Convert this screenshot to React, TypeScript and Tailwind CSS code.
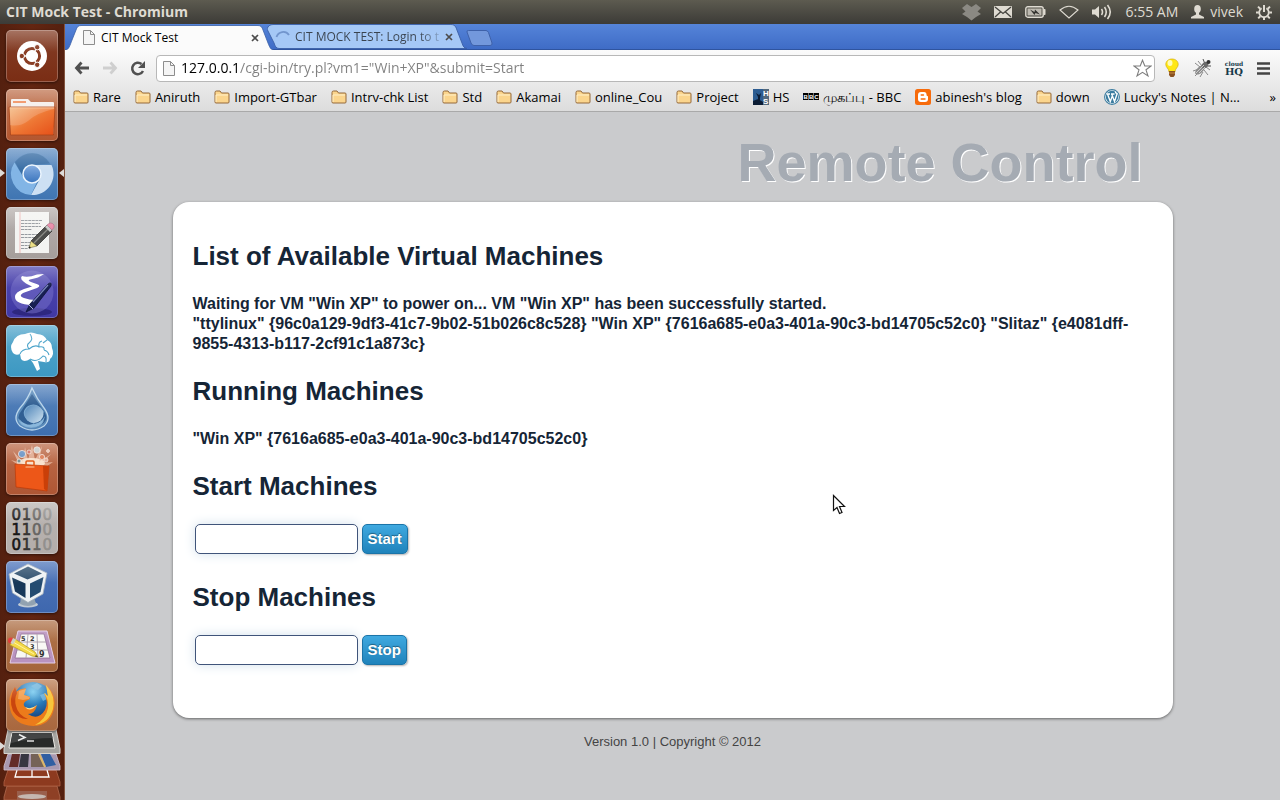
import type { ReactNode } from "react";

const UI_FONT = "font-['Open_Sans','Noto_Sans',sans-serif]";

/* ---------- top panel ---------- */

function DropboxIcon() {
  return (
    <svg className="h-[18px] w-[19px]" viewBox="0 0 19 18" fill="#8b8983" aria-hidden="true">
      <path d="M5 1 L9.5 4 L14 1 L19 5 L15.5 8.5 L19 11 L14 14 L9.5 17.5 L5 14 L0 11 L3.5 8.5 L0 5Z" />
    </svg>
  );
}

function MailIcon() {
  return (
    <svg className="h-3 w-[18px]" viewBox="0 0 18 12" aria-hidden="true">
      <rect width="18" height="12" rx="1" fill="#dfdbd2" />
      <path d="M1 1 L9 7.5 L17 1 M1 11 L6.5 6 M17 11 L11.5 6" fill="none" stroke="#45443f" strokeWidth="1.3" />
    </svg>
  );
}

function BatteryIcon() {
  return (
    <svg className="h-3 w-[21px]" viewBox="0 0 21 12" aria-hidden="true">
      <rect x="0.8" y="0.8" width="17.4" height="10.4" rx="2" fill="none" stroke="#dfdbd2" strokeWidth="1.4" />
      <rect x="2.5" y="2.5" width="14" height="7" fill="#bdb9b0" />
      <rect x="18.5" y="3" width="2" height="6" rx="0.8" fill="#dfdbd2" />
      <path d="M5 3.5 L9.5 6 L10 3.5 L15 8.5 L10.5 7 L9.5 9Z" fill="#34332f" />
    </svg>
  );
}

function WifiIcon() {
  return (
    <svg className="h-[14px] w-5" viewBox="0 0 20 14" aria-hidden="true">
      <path d="M1 5 Q10 -2.6 19 5 L10 13Z" fill="none" stroke="#dfdbd2" strokeWidth="1.1" />
    </svg>
  );
}

function VolumeIcon() {
  return (
    <svg className="h-4 w-5" viewBox="0 0 20 16" aria-hidden="true">
      <path d="M0 5.5 H3 L7 2 V14 L3 10.5 H0Z" fill="#dfdbd2" />
      <path d="M9.5 5 Q11.5 8 9.5 11 M12.5 3 Q16 8 12.5 13 M15.5 1 Q21 8 15.5 15" fill="none" stroke="#dfdbd2" strokeWidth="1.6" />
    </svg>
  );
}

function UserIcon() {
  return (
    <svg className="h-[14px] w-[13px]" viewBox="0 0 13 14" fill="#dfdbd2" aria-hidden="true">
      <ellipse cx="6.5" cy="4" rx="3.3" ry="4" />
      <path d="M5 7 H8 V9.6 L13 12 V13.5 H0 V12 L5 9.6Z" />
    </svg>
  );
}

function SessionIcon() {
  return (
    <svg className="h-4 w-4" viewBox="0 0 16 16" fill="none" stroke="#dfdbd2" aria-hidden="true">
      <path d="M5.6 4.3 A4.8 4.8 0 1 0 10.4 4.3" strokeWidth="1.8" />
      <path d="M8 1 V8" strokeWidth="2" />
      <path d="M0 8.5 H2.8 M13.2 8.5 H16 M2 2.6 L4.2 4.8 M14 2.6 L11.8 4.8 M2.2 14.4 L4.3 12.3 M13.8 14.4 L11.7 12.3 M8 13.4 V16" strokeWidth="2" />
    </svg>
  );
}

function TopPanel() {
  return (
    <header className="flex h-6 shrink-0 items-center justify-between bg-linear-to-b from-[#5d5b50] to-[#3c3b37] pr-2 pl-1.5 text-[#dfdbd2]">
      <p className="text-sm leading-6 font-bold">CIT Mock Test - Chromium</p>
      <div className="flex items-center gap-[13px] text-sm leading-6">
        <DropboxIcon />
        <MailIcon />
        <BatteryIcon />
        <WifiIcon />
        <VolumeIcon />
        <time>6:55 AM</time>
        <button type="button" className="flex items-center gap-1.5">
          <UserIcon />
          vivek
        </button>
        <button type="button" aria-label="Session">
          <SessionIcon />
        </button>
      </div>
    </header>
  );
}

/* ---------- launcher ---------- */

function Tile({ label, tone, marks, children }: { label: string; tone: string; marks?: boolean; children: ReactNode }) {
  return (
    <div className="relative flex w-full shrink-0 justify-center pr-px">
      {marks && (
        <>
          <svg className="absolute top-[21px] left-0 h-2 w-[5px]" viewBox="0 0 5 8" fill="#dedbd8" aria-hidden="true">
            <path d="M0 0 L5 4 L0 8Z" />
          </svg>
          <svg className="absolute top-[21px] right-0 h-2 w-[5px]" viewBox="0 0 5 8" fill="#dedbd8" aria-hidden="true">
            <path d="M5 0 L0 4 L5 8Z" />
          </svg>
        </>
      )}
      <button
        type="button"
        aria-label={label}
        className={`size-[52px] overflow-hidden rounded-[5px] shadow-[inset_0_0_0_1px_rgba(255,255,255,0.25),0_1px_3px_rgba(0,0,0,0.5)] ${tone}`}
      >
        <svg className="size-full" viewBox="0 0 52 52" aria-hidden="true">
          {children}
          <rect width="52" height="22" fill="url(#gloss)" />
        </svg>
      </button>
    </div>
  );
}

function DashArt() {
  return (
    <>
      <circle cx="26" cy="26" r="15" fill="#fff" />
      <circle cx="26" cy="26" r="7.6" fill="none" stroke="#8a3e25" strokeWidth="3" />
      <path d="M26 26 L12 26 M26 26 L33 14 M26 26 L33 38" stroke="#fff" strokeWidth="1.4" />
      <circle cx="26" cy="26" r="5.8" fill="#fff" />
      <g fill="#8a3e25" stroke="#fff" strokeWidth="1">
        <circle cx="15.8" cy="26" r="2.7" />
        <circle cx="31.2" cy="17.2" r="2.7" />
        <circle cx="31.2" cy="34.8" r="2.7" />
      </g>
    </>
  );
}

function FilesArt() {
  return (
    <>
      <path d="M5 11 Q5 10 6 10 H22 L25 13 H47 Q48 13 48 14 V45 H5Z" fill="#f5efec" />
      <rect x="7" y="12" width="13" height="2" fill="#f09060" />
      <path d="M3 18 H49 L47.5 46 H4.5Z" fill="url(#folder)" stroke="#a94419" strokeWidth="0.8" />
      <path d="M4 19 H48" stroke="#fbd0ae" strokeWidth="1" />
      <path d="M4 20 H48 Q30 24 22 32 Q14 38 4 36Z" fill="#fff" opacity="0.17" />
    </>
  );
}

function ChromiumArt() {
  return (
    <>
      <circle cx="26" cy="26" r="21" fill="#4a80b8" opacity="0.6" />
      <path d="M9 14 A21 21 0 0 1 44 15.500 L26 17 L18 30Z" fill="#34689f" opacity="0.75" />
      <path d="M27 17 H45.500 A21 21 0 0 1 25 47 L34.500 30Z" fill="#cde0f3" />
      <path d="M8.500 14.500 A21 21 0 0 0 25 47 L31 34 L19 32Z" fill="#82b5e6" />
      <circle cx="26" cy="26" r="9" fill="url(#orb)" stroke="#eaf4fd" strokeWidth="1.500" />
    </>
  );
}

function EditorArt() {
  return (
    <>
      <rect x="9" y="6" width="35" height="41" fill="#a6a09e" opacity="0.7" />
      <rect x="9" y="5" width="34" height="41" fill="#f3f3f1" />
      <path d="M14 5 V46" stroke="#eda9a9" strokeWidth="0.8" />
      <path d="M15 13.500 H36 M15 16.500 H34 M15 19.500 H35 M15 22.500 H26 M15 27.500 H32 M15 30.500 H29 M15 35.500 H26 M15 38.500 H25 M15 41.500 H22" stroke="#969a9f" strokeWidth="1" strokeDasharray="3 0.600" />
      <path d="M25 34 L41 18 L46 24 L31 39Z" fill="#4d4d4b" stroke="#252523" strokeWidth="0.7" />
      <path d="M28 36 L43.500 20.500" stroke="#8c8c86" strokeWidth="1.200" />
      <path d="M39 20 L42 17 L47 22 L44 25Z" fill="#c7c9c8" />
      <path d="M41 18 Q45 14 48 18 Q49 20 46 23Z" fill="#e98ca8" stroke="#a55b76" strokeWidth="0.5" />
      <path d="M25 34 L31 39 L23 41Z" fill="#ecdf86" stroke="#5b5533" strokeWidth="0.500" />
      <circle cx="23.600" cy="40.400" r="1" fill="#222" />
    </>
  );
}

function EmacsArt() {
  return (
    <>
      <ellipse cx="26" cy="46" rx="20" ry="4" fill="#221d68" opacity="0.6" />
      <circle cx="26" cy="26" r="21.500" fill="#7771c9" opacity="0.5" />
      <path d="M16 10 Q22 12 31 8.500 L38 8 Q33 12 24 13.500 Q21 14.500 25 16 L32 18.500 Q35 20 31 22 L17 27 Q12 30 18 32 Q23 34 30 34 L26 39 Q9 38 9 31 Q9 26 18 23 L26 20.500 L20 17.500 Q13 13 16 10Z" fill="#fff" />
      <path d="M20 46 L24 38 L42 18 Q46 15 45 20 L28 42Z" fill="#182052" stroke="#0c1137" strokeWidth="0.800" />
      <path d="M27 36 L42 19" stroke="#7985bc" strokeWidth="1.200" />
      <path d="M23 39 L27 43" stroke="#bfc6ed" strokeWidth="0.900" />
    </>
  );
}

function BrainArt() {
  return (
    <>
      <path d="M7 28 Q3 22 7 17 Q10 9 19 9 Q25 6 31 9 Q38 9 41 15 Q46 17 46 23 Q49 30 44 34 Q44 38 38 37 L32 36 L34 44 L31 46 L27 38 L24 34 Q18 38 15 34 L14 29 Q10 31 7 28Z" fill="#fff" />
      <path d="M24 9 Q28 14 23 18 Q20 20 23 24 M14 29 Q16 24 23 24 Q29 19 33 22 Q39 21 38 25 M24 34 Q31 38 37 31 Q41 31 40 37 M33 22 Q32 17 36 16 M41 15 L37 18 M38 25 Q42 26 43 30" fill="none" stroke="#4ba4ca" strokeWidth="1.100" />
    </>
  );
}

function DelugeArt() {
  return (
    <>
      <path d="M26 4 Q31 15 38 24 Q46 35 38 42 Q26 50 14 42 Q6 35 14 24 Q22 15 26 4Z" fill="#5889b9" stroke="#b8d4ea" strokeWidth="1.300" />
      <path d="M26 10 L37 26 Q44 35 36 40 Q26 47 16 40 Q9 34 16 26Z" fill="#315f93" />
      <path d="M38 28 Q31 17 22 22 Q14 28 21 36 Q29 43 38 37 Q34 44 25 44 Q13 43 12 34 Q18 44 27 40" fill="#7fadd3" />
      <ellipse cx="28" cy="30" rx="9.500" ry="9" fill="url(#water)" />
      <path d="M39 32 Q37 43 26 43 Q16 43 13 35 Q20 43 29 40 Q36 38 39 32Z" fill="#8bb8dc" />
    </>
  );
}

function SoftwareArt() {
  return (
    <>
      <path d="M12 22 L5 17 L12 19 L7 8 L17 19 L19 4 L22 17 L26 2 L29 17 L36 3 L33 19 L45 11 L37 20 L47 19 L40 24Z" fill="#ffdcc6" opacity="0.55" />
      <ellipse cx="25" cy="20" rx="14" ry="5" fill="#fff0dc" opacity="0.8" />
      <g stroke="#f4e4dc" strokeWidth="0.800">
        <circle cx="16" cy="11" r="3.600" fill="#628fc2" />
        <circle cx="31" cy="7" r="3.200" fill="#c6cbca" />
        <circle cx="23" cy="9" r="2" fill="#d06256" />
        <circle cx="36" cy="14" r="2.600" fill="#db7951" />
        <circle cx="13" cy="18" r="2" fill="#738f91" />
        <circle cx="40" cy="17" r="2" fill="#e7ac95" />
        <circle cx="42" cy="8" r="1.400" fill="#e7ac95" />
      </g>
      <path d="M9 21 L43 23 L41 48 L10 44Z" fill="#ed5718" stroke="#ba3b0a" strokeWidth="0.700" />
      <path d="M37 23 L43 23 L41 48 L38 46Z" fill="#ca3f08" />
      <path d="M20 24 V19 Q20 18 21 18 H27 Q28 18 28 19 V25" fill="none" stroke="#e0560f" strokeWidth="1.500" />
      <path d="M19.500 24 H28.500" stroke="#ffc79c" strokeWidth="1" />
    </>
  );
}

function BinaryArt() {
  return (
    <g fontFamily="'DejaVu Sans', sans-serif" fontSize="15" strokeWidth="0.600">
      {["0100", "1100", "0110"].map((row, r) => (
        <g key={row}>
          {row.split("").map((d, i) => {
            const tone = ["#161616", "#343332", "#676563", "#92908d"][i];
            return (
              <text key={i} x={5.500 + i * 10.300} y={17.500 + r * 15} fill={tone} stroke={tone}>
                {d}
              </text>
            );
          })}
        </g>
      ))}
    </g>
  );
}

function VirtualBoxArt() {
  return (
    <>
      <ellipse cx="22" cy="43.500" rx="10" ry="3" fill="#c0cad3" />
      <path d="M15 36 H28 L30 43 Q22 47 14 43Z" fill="#91a2b1" />
      <path d="M22 3 L41 12 L37 33 L22 41.500 L6.500 32 L3 13Z" fill="#eef2f4" stroke="#9eacb8" strokeWidth="0.800" />
      <path d="M22 5.500 L36 12.500 L21.500 18.500 L8 12.500Z" fill="#2d4e6c" />
      <path d="M6 16.500 L19.500 22.500 V37 L9 30.500Z" fill="#173859" />
      <path d="M24 22.500 L37.500 16 L34.500 31 L24 37Z" fill="#234b70" />
    </>
  );
}

function SudokuArt() {
  return (
    <>
      <path d="M12 11 H41 L49 43 H4Z" fill="#b993bf" stroke="#e5cfe8" />
      <path d="M15 14 H38 L44 38 H9Z" fill="#f9f8f5" stroke="#8d6a93" strokeWidth="0.800" />
      <path d="M13 22 H40 M11 30 H42 M22 14 L20 38 M31 14 L32 38" stroke="#a69ca9" strokeWidth="0.900" />
      <g fontFamily="'DejaVu Sans', sans-serif" fontWeight="700" fontSize="6.500" fill="#333">
        <text x="15" y="20.500">5</text>
        <text x="24" y="20.500">2</text>
        <text x="24" y="28.500">3</text>
        <text x="33" y="37" fontSize="8">9</text>
      </g>
      <path d="M5 22 L9 19 L29 32 L32 37 L26 36 L4 25Z" fill="#f4d948" stroke="#b09a18" strokeWidth="0.700" />
      <path d="M7 22 L28 34" stroke="#fff5a1" strokeWidth="1" />
      <path d="M30 35 L32 37 L29 36.500Z" fill="#34322e" />
      <circle cx="5" cy="20.500" r="3" fill="#e33a37" />
      <path d="M7 18 L10 19.500 L7 24.500 L4.500 23Z" fill="#cfd0c2" />
    </>
  );
}

function FirefoxArt() {
  return (
    <>
      <circle cx="27" cy="23" r="20" fill="url(#globe)" />
      <path d="M25 7 L31 4 L36 7 L32 11 L29 10Z M34 16 L40 14 L41 20 L37 22Z" fill="#77b9df" opacity="0.8" />
      <path d="M40 6 Q51 16 48 30 Q44 47 27 47 Q8 46 4 30 Q1 17 9 8 L10 13 Q13 10 20 9 Q17 13 18 16 Q25 17 24 20 L20 22 Q16 25 19 28 Q24 32 31 26 Q29 35 22 35 Q32 42 39 31 Q43 23 38 14 L42 17Z" fill="#ec7b1b" />
      <path d="M40 6 Q50 17 47 30 Q43 44 29 46 Q40 40 42 29 Q43 21 38 14 L42 17Z" fill="#f7c53b" />
      <path d="M9 8 L11 14 Q8 20 10 27 Q12 36 22 40 Q13 41 7 32 Q2 20 9 8Z" fill="#c9450e" />
      <path d="M13 12 L20 10 L18 16 L24 18 L23 20 L17 21 L12 20Z" fill="#f4a051" />
      <path d="M31 26 Q25 31 19 28 Q24 34 31 26Z" fill="#ffe093" />
    </>
  );
}

function LauncherStack() {
  return (
    <svg className="-mt-[9px] h-[71px] w-16 shrink-0" viewBox="0 0 64 71" aria-hidden="true">
      <path d="M7 57 H57 L60 68 V71 H4 V68Z" fill="#8e4025" stroke="#b06a4e" strokeWidth="0.800" />
      <path d="M17 62 H47 V71 H17Z" fill="#9a5f4c" />
      <ellipse cx="32" cy="67.500" rx="14" ry="2.500" fill="#c5b7b0" />
      <path d="M8 41 H56 L60 53 V57 H4 V53Z" fill="#8d3a1f" stroke="#ad6144" strokeWidth="0.800" />
      <path d="M17 41 L15 48 H49 L47 41 M32 41 V48" fill="none" stroke="#fff" strokeWidth="1.300" />
      <path d="M8 25 H56 L60 37 V41 H4 V37Z" fill="#a999b0" stroke="#d4c3d0" strokeWidth="0.800" />
      <path d="M12 25 H20 L18 38 H9Z" fill="#632b28" />
      <path d="M21 25 H29 L28 38 H19Z" fill="#373741" />
      <path d="M31 25 H38 L45 38 H31Z" fill="#756357" />
      <path d="M41 25 H50 L56 36 L46 38Z" fill="#315fa2" />
      <path d="M39 25 L45 38" stroke="#dbb769" strokeWidth="2" />
      <path d="M8 0.500 H56 L60 20 V24.500 H4 V20Z" fill="#a5a4a0" stroke="#d5d3ce" />
      <path d="M12 3.500 H52 L55 19 H9Z" fill="#282a29" stroke="#eceae6" />
      <path d="M12.500 4 H51.500 L53 9 Q32 9 11 14Z" fill="#575858" opacity="0.6" />
      <path d="M19 5.500 L25 8.500 L18 11.500" fill="none" stroke="#eee" strokeWidth="1.500" />
      <path d="M27 12 H34" stroke="#eee" strokeWidth="1.400" />
      <path d="M0 13 L5 17 L0 21Z" fill="#dedbd8" />
    </svg>
  );
}

function Launcher() {
  return (
    <nav aria-label="Launcher" className="flex w-[65px] shrink-0 flex-col gap-[7px] overflow-hidden border-r border-[#83543f] bg-linear-to-r from-[#54200f] via-[#632511] to-[#54200f] pt-1.5">
      <svg className="absolute size-0" aria-hidden="true">
        <defs>
          <linearGradient id="gloss" x1="0" y1="0" x2="0" y2="1">
            <stop offset="0" stopColor="#fff" stopOpacity="0.28" />
            <stop offset="1" stopColor="#fff" stopOpacity="0" />
          </linearGradient>
          <linearGradient id="folder" x1="0" y1="0" x2="1" y2="1">
            <stop offset="0" stopColor="#f4bb83" />
            <stop offset="0.500" stopColor="#ee7835" />
            <stop offset="1" stopColor="#e64f18" />
          </linearGradient>
          <linearGradient id="orb" x1="0" y1="0" x2="0" y2="1">
            <stop offset="0" stopColor="#84ace0" />
            <stop offset="1" stopColor="#3974bd" />
          </linearGradient>
          <linearGradient id="water" x1="0" y1="0" x2="1" y2="1">
            <stop offset="0" stopColor="#4d83b8" />
            <stop offset="1" stopColor="#cfe3f0" />
          </linearGradient>
          <radialGradient id="globe" cx="0.500" cy="0.250" r="0.700">
            <stop offset="0" stopColor="#7dcdf1" />
            <stop offset="0.500" stopColor="#2878b7" />
            <stop offset="1" stopColor="#173c75" />
          </radialGradient>
        </defs>
      </svg>
      <Tile label="Dash home" tone="bg-linear-to-b from-[#853f27] to-[#7a2d14]"><DashArt /></Tile>
      <Tile label="Home folder" tone="bg-linear-to-b from-[#c07552] to-[#b3562f]"><FilesArt /></Tile>
      <Tile label="Chromium" tone="bg-linear-to-b from-[#6391c4] to-[#3f75b2]" marks><ChromiumArt /></Tile>
      <Tile label="Text editor" tone="bg-linear-to-b from-[#b8b1af] to-[#a59e9b]"><EditorArt /></Tile>
      <Tile label="Emacs" tone="bg-linear-to-b from-[#5048b0] to-[#4038a4]"><EmacsArt /></Tile>
      <Tile label="Mind map" tone="bg-linear-to-b from-[#57a8cc] to-[#3c98c2]"><BrainArt /></Tile>
      <Tile label="Deluge" tone="bg-linear-to-b from-[#5885bd] to-[#3d6eae]"><DelugeArt /></Tile>
      <Tile label="Software center" tone="bg-linear-to-b from-[#bd6d4b] to-[#ae5634]"><SoftwareArt /></Tile>
      <Tile label="Hex viewer" tone="bg-linear-to-b from-[#b9b4b1] to-[#b3adaa]"><BinaryArt /></Tile>
      <Tile label="VirtualBox" tone="bg-linear-to-b from-[#4f76ba] to-[#3e67ae]"><VirtualBoxArt /></Tile>
      <Tile label="Sudoku" tone="bg-linear-to-b from-[#b0744b] to-[#a4653a]"><SudokuArt /></Tile>
      <Tile label="Firefox" tone="bg-linear-to-b from-[#bb7d54] to-[#a8673e]"><FirefoxArt /></Tile>
      <LauncherStack />
    </nav>
  );
}

/* ---------- browser chrome ---------- */

function PageIcon() {
  return (
    <svg className="h-[15px] w-3 shrink-0" viewBox="0 0 12 15" aria-hidden="true">
      <path d="M0.500 0.500 H7.500 L11.500 4.500 V14.500 H0.500Z" fill="#f5f5f5" stroke="#8d8d8d" />
      <path d="M7.500 0.500 V4.500 H11.500" fill="none" stroke="#8d8d8d" />
    </svg>
  );
}

function CloseIcon() {
  return (
    <svg className="size-2" viewBox="0 0 8 8" aria-hidden="true">
      <path d="M1 1 L7 7 M7 1 L1 7" stroke="#4c4c4c" strokeWidth="1.700" />
    </svg>
  );
}

function TabStrip() {
  return (
    <div className="flex h-[26px] shrink-0 items-end border-b border-[#2f549f] bg-linear-to-b from-[#5584d9] to-[#3f6cc6]">
      <div className="relative z-10 -mb-px flex h-[25px] w-[209px] shrink-0 items-center pr-[15px] pl-[18px]">
        <svg className="absolute inset-0 size-full" viewBox="0 0 209 25" preserveAspectRatio="none" aria-hidden="true">
          <path d="M0 25 C4 25 5 20 7 15 L11 5 C12 2 13 0.500 16 0.500 H193 C196 0.500 197 2 198 5 L203 18 C205 23 206 25 209 25Z" fill="#fbfbfb" />
          <path d="M0 25 C4 25 5 20 7 15 L11 5 C12 2 13 0.500 16 0.500 H193 C196 0.500 197 2 198 5 L203 18 C205 23 206 25 209 25" fill="none" stroke="#3a5fa6" strokeWidth="0.800" />
        </svg>
        <div className="relative flex min-w-0 flex-1 items-center gap-1.5">
          <PageIcon />
          <span className="flex-1 truncate text-xs">CIT Mock Test</span>
          <button type="button" aria-label="Close tab" className="p-1 pr-0">
            <CloseIcon />
          </button>
        </div>
      </div>
      <div className="relative -ml-[7px] flex h-[25px] w-[200px] shrink-0 items-center pr-3.5 pl-2">
        <svg className="absolute inset-0 size-full" viewBox="0 0 199 25" preserveAspectRatio="none" aria-hidden="true">
          <path d="M0 5 C1 2 3 0.500 6 0.500 H183 C187 0.500 188 3 189 6 L194 19 C195 22 196 24.500 199 24.500 H12 C9 24.500 8 22 7 19Z" fill="#a5c8f6" stroke="#3a5fa6" strokeWidth="0.900" />
        </svg>
        <div className="relative flex min-w-0 flex-1 items-center gap-1">
          <svg className="size-4 shrink-0" viewBox="0 0 16 16" aria-hidden="true">
            <path d="M1.500 8 A7 7 0 0 1 14 6" fill="none" stroke="#7295cd" strokeWidth="1.800" />
          </svg>
          <span className="flex-1 bg-linear-to-r from-[#39434f] from-85% to-[#39434f]/20 bg-clip-text text-xs whitespace-nowrap text-transparent">
            CIT MOCK TEST: Login to t
          </span>
          <button type="button" aria-label="Close tab" className="py-1">
            <CloseIcon />
          </button>
        </div>
      </div>
      <button type="button" aria-label="New tab" className="mb-[3px] -ml-px">
        <svg className="h-4 w-[27px]" viewBox="0 0 27 16" aria-hidden="true">
          <path d="M1 2 Q0.500 0.500 2.500 0.500 H20 Q21.500 0.500 22.500 2.500 L26 13 Q26.500 15.500 24 15.500 H8 Q6 15.500 5 13Z" fill="#7398dc" stroke="#3e61a9" />
        </svg>
      </button>
    </div>
  );
}

function Toolbar() {
  return (
    <div className="flex h-9 items-center gap-2.5 pr-2.5 pl-2">
      <div className="flex items-center gap-[11px] text-[#505050]">
        <button type="button" aria-label="Back">
          <svg className="size-[17px]" viewBox="0 0 17 17" fill="none" stroke="currentColor" aria-hidden="true">
            <path d="M8.500 2.500 L3.500 8 L8.500 13.500 M4 8 H16" strokeWidth="2.800" />
          </svg>
        </button>
        <button type="button" aria-label="Forward" className="text-[#cfcfcf]">
          <svg className="size-[17px]" viewBox="0 0 17 17" fill="none" stroke="currentColor" aria-hidden="true">
            <path d="M9.500 2.500 L14.500 8 L9.500 13.500 M14 8 H2" strokeWidth="2.800" />
          </svg>
        </button>
        <button type="button" aria-label="Reload">
          <svg className="size-[17px]" viewBox="0 0 17 17" aria-hidden="true">
            <path d="M14 11 A5.700 5.700 0 1 1 12.500 4" fill="none" stroke="currentColor" strokeWidth="2.500" />
            <path d="M16 1 V8 H9Z" fill="currentColor" />
          </svg>
        </button>
      </div>
      <div className="flex h-[27px] min-w-0 flex-1 items-center gap-1.5 rounded border border-[#b8b8b8] bg-white px-1.5">
        <PageIcon />
        <input
          aria-label="Address"
          defaultValue={'127.0.0.1/cgi-bin/try.pl?vm1="Win+XP"&submit=Start'}
          className="min-w-0 flex-1 bg-linear-to-r from-black from-[57px] to-[#808080] to-[57px] bg-clip-text text-sm text-transparent outline-none"
        />
        <button type="button" aria-label="Bookmark this page" className="-mr-1">
          <svg className="size-[19px]" viewBox="0 0 19 19" aria-hidden="true">
            <path d="M9.500 1.200 L11.800 7 H18 L13 10.800 L15 17 L9.500 13.300 L4 17 L6 10.800 L1 7 H7.200Z" fill="#fff" stroke="#7d7d7d" strokeWidth="1.100" />
          </svg>
        </button>
      </div>
      <div className="flex items-center gap-[13px]">
        <button type="button" aria-label="Bulb extension">
          <svg className="h-5 w-[14px]" viewBox="0 0 14 20" aria-hidden="true">
            <path d="M7 1 C3 1 0.800 3.500 0.800 6.500 C0.800 9.500 4 10.500 4 14 H10 C10 10.500 13.200 9.500 13.200 6.500 C13.200 3.500 11 1 7 1Z" fill="#ffe713" stroke="#d2ac11" strokeWidth="0.700" />
            <ellipse cx="5" cy="5" rx="2.500" ry="3" fill="#fffbb7" />
            <path d="M4 13 H10 V17 L8.500 19 H5.500 L4 17Z" fill="#8a5220" />
            <path d="M4 15 H10" stroke="#c98c40" />
          </svg>
        </button>
        <button type="button" aria-label="Bug extension">
          <svg className="size-5" viewBox="0 0 20 20" aria-hidden="true">
            <path d="M3 5 L8 9 M6 3 L10 8 M1 13 L7 11 M3 18 L8 13 M8 19 L11 14 M16 17 L12 12 M18 12 L14 9" stroke="#8a8a8a" strokeWidth="1" />
            <path d="M13 6 L11 1 M15 8 L19 8" stroke="#515151" strokeWidth="1" />
            <ellipse cx="8" cy="12" rx="6" ry="3" transform="rotate(-42 8 12)" fill="#8c8c8c" />
            <ellipse cx="13" cy="7" rx="3.600" ry="2.800" transform="rotate(-42 13 7)" fill="#6a6a6a" />
            <circle cx="16.500" cy="4" r="2" fill="#333" />
            <path d="M4 15 L12 7 M7 15 L13 9" stroke="#ccc" />
          </svg>
        </button>
        <button type="button" aria-label="cloudHQ" className="flex w-[18px] flex-col items-center font-['DejaVu_Serif',serif] font-bold text-[#16394b]">
          <span className="text-[6px] leading-[7px]">cloud</span>
          <span className="text-[10px] leading-[10px]">HQ</span>
        </button>
        <button type="button" aria-label="Menu" className="pl-px">
          <svg className="h-[13px] w-[13px]" viewBox="0 0 13 13" aria-hidden="true">
            <path d="M0 1.500 H13 M0 6.500 H13 M0 11.500 H13" stroke="#444" strokeWidth="2.600" />
          </svg>
        </button>
      </div>
    </div>
  );
}

function FolderIcon() {
  return (
    <svg className="h-[14px] w-4" viewBox="0 0 16 14" aria-hidden="true">
      <path d="M1 12 V2.500 Q1 1 2.500 1 H6 L7.500 3 H14 Q15 3 15 4 V12 Q15 13 14 13 H2 Q1 13 1 12Z" fill="#fbd58d" stroke="#94693a" />
      <path d="M2 5 H14 M2 5 V12" stroke="#fff0c8" />
    </svg>
  );
}

function HsIcon() {
  return (
    <svg className="size-4" viewBox="0 0 16 16" aria-hidden="true">
      <rect width="16" height="16" fill="#2c5c91" />
      <path d="M0 12 L5 10 L10 13 V16 H0Z M3 4 L6 6 L8 4 L7 9 V13 H5 V8Z" fill="#0b1c34" />
      <rect x="10" width="6" height="16" fill="#52687c" />
      <g fontFamily="'Liberation Sans', sans-serif" fontWeight="700" fontSize="8" fill="#fff">
        <text x="10" y="7">H</text>
        <text x="10" y="15">S</text>
      </g>
    </svg>
  );
}

function BbcIcon() {
  return (
    <svg className="size-4" viewBox="0 0 16 16" aria-hidden="true">
      <path d="M0 4 H5 V11 H0Z M5.500 4 H10.500 V11 H5.500Z M11 4 H16 V11 H11Z" fill="#000" />
      <g fontFamily="'Liberation Sans', sans-serif" fontWeight="700" fontSize="6" fill="#fff">
        <text x="0.400" y="9.700">B</text>
        <text x="5.900" y="9.700">B</text>
        <text x="11.300" y="9.700">C</text>
      </g>
    </svg>
  );
}

function BloggerIcon() {
  return (
    <svg className="size-4" viewBox="0 0 16 16" aria-hidden="true">
      <rect width="16" height="16" rx="2.500" fill="#f76b0b" />
      <path d="M6 3 H9 Q11.500 3 11.500 5.500 Q11.500 7 12.500 7 Q13 7 13 8 V10 Q13 13 10 13 H6 Q3 13 3 10 V6 Q3 3 6 3Z" fill="#fff" />
      <path d="M6.200 6 H8.500 M6.200 10 H10" stroke="#f76b0b" strokeWidth="1.400" strokeLinecap="round" />
    </svg>
  );
}

function WordPressIcon() {
  return (
    <svg className="size-4" viewBox="0 0 16 16" aria-hidden="true">
      <circle cx="8" cy="8" r="7.400" fill="#fff" stroke="#3b7c9f" strokeWidth="1.100" />
      <circle cx="8" cy="8" r="6.200" fill="#3b7c9f" />
      <path d="M2.500 5 H6 M7 5 H10.500 M3.500 5 L6.300 12.500 L8.300 7 M7.700 5 L10.500 12.500 L13 5 Q11 4 11.500 2.500" fill="none" stroke="#fff" strokeWidth="1.300" />
    </svg>
  );
}

const BOOKMARKS: { label: string; icon?: ReactNode }[] = [
  { label: "Rare" },
  { label: "Aniruth" },
  { label: "Import-GTbar" },
  { label: "Intrv-chk List" },
  { label: "Std" },
  { label: "Akamai" },
  { label: "online_Cou" },
  { label: "Project" },
  { label: "HS", icon: <HsIcon /> },
  { label: "முகப்பு - BBC", icon: <BbcIcon /> },
  { label: "abinesh's blog", icon: <BloggerIcon /> },
  { label: "down" },
  { label: "Lucky's Notes | N…", icon: <WordPressIcon /> },
];

function BookmarksBar() {
  return (
    <nav aria-label="Bookmarks" className="flex h-[26px] items-center justify-between border-b border-[#a9a9a9] pb-1 pr-1 pl-2 text-[13px] leading-5 whitespace-nowrap">
      <ul className="flex gap-3.5">
        {BOOKMARKS.map((b) => (
          <li key={b.label}>
            <a href="#" className="flex items-center gap-1">
              {b.icon ?? <FolderIcon />}
              {b.label}
            </a>
          </li>
        ))}
      </ul>
      <button type="button" aria-label="More bookmarks">»</button>
    </nav>
  );
}

/* ---------- page ---------- */

const VM_LIST = [
  `"ttylinux" {96c0a129-9df3-41c7-9b02-51b026c8c528}`,
  `"Win XP" {7616a685-e0a3-401a-90c3-bd14705c52c0}`,
  `"Slitaz" {e4081dff-9855-4313-b117-2cf91c1a873c}`,
].join(" ");

function MachineForm({ title, action }: { title: string; action: string }) {
  const id = `vm-${action.toLowerCase()}`;
  return (
    <section>
      <h2 className="mb-[23px] text-[26px] leading-[30px] font-bold">
        <label htmlFor={id}>{title}</label>
      </h2>
      <form className="flex gap-1 pl-0.5" onSubmit={(e) => e.preventDefault()}>
        <input
          id={id}
          type="text"
          className="h-[30px] w-[163px] rounded-[5px] border border-[#40547a] px-1 shadow-[0_0_12px_#d3e1ec] outline-none"
        />
        <button
          type="submit"
          className="h-[30px] rounded-[5px] border border-[#1b74a8] bg-linear-to-b from-[#3fa9e0] to-[#1f83bb] px-[5px] text-[15px] font-bold text-white shadow-[1px_1px_2px_rgba(0,0,0,0.3)] text-shadow-[0_-1px_1px_rgba(0,0,0,0.4)]"
        >
          {action}
        </button>
      </form>
    </section>
  );
}

function Page() {
  return (
    <main className="flex-1 overflow-hidden bg-[#cacbcd] px-5 font-['Liberation_Sans',Arial,sans-serif] text-[#152536]">
      <div className="mx-auto max-w-[1000px]">
        <h1 className="pt-5 pr-[30px] pb-2.5 text-right text-[54px] leading-[60px] font-bold text-[#a5abb3] text-shadow-[1px_1px_0_#ffffff]">
          Remote Control
        </h1>
        <div className="flex flex-col gap-[22px] rounded-2xl bg-white px-5 pt-[39px] pb-[53px] shadow-[0_1px_3px_rgba(0,0,0,0.5)]">
          <section>
            <h2 className="mb-[23px] text-[26px] leading-[30px] font-bold">List of Available Virtual Machines</h2>
            <p className="text-base leading-5 font-bold">
              Waiting for VM "Win XP" to power on... VM "Win XP" has been successfully started.
              <br />
              {VM_LIST}
            </p>
          </section>
          <section>
            <h2 className="mb-[23px] text-[26px] leading-[30px] font-bold">Running Machines</h2>
            <p className="text-base leading-5 font-bold">{`"Win XP" {7616a685-e0a3-401a-90c3-bd14705c52c0}`}</p>
          </section>
          <div className="flex flex-col gap-7">
            <MachineForm title="Start Machines" action="Start" />
            <MachineForm title="Stop Machines" action="Stop" />
          </div>
        </div>
        <footer className="pt-[14px] text-center text-[13px] leading-5 text-[#444]">Version 1.0 | Copyright © 2012</footer>
      </div>
    </main>
  );
}

export default function App() {
  return (
    <div className={`relative flex h-screen flex-col overflow-hidden text-black ${UI_FONT}`}>
      <TopPanel />
      <div className="flex min-h-0 flex-1">
        <Launcher />
        <div className="flex min-w-0 flex-1 flex-col">
          <TabStrip />
          <div className="shrink-0 bg-linear-to-b from-[#fbfbfb] to-[#dcdcdc]">
            <Toolbar />
            <BookmarksBar />
          </div>
          <Page />
        </div>
      </div>
      <svg className="pointer-events-none absolute top-[494px] left-[832px] h-[21px] w-[14px]" viewBox="0 0 14 21" aria-hidden="true">
        <path d="M1.500 1.500 V16.500 L5 13.500 L7.500 19.500 L10 18.500 L7.500 12.500 H12.500Z" fill="#fff" stroke="#111" strokeWidth="1.200" />
      </svg>
    </div>
  );
}
